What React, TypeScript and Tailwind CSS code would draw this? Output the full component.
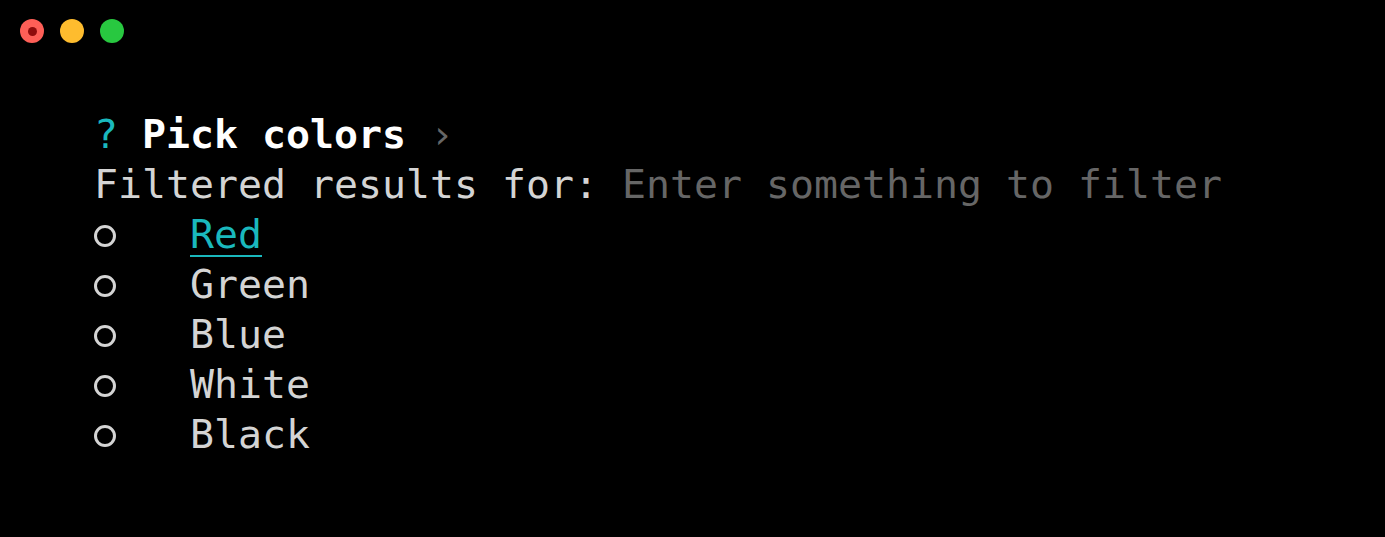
import React from "react";

const items = ["Red", "Green", "Blue", "White", "Black"];

export default function App() {
  return (
    <div
      className="w-[1385px] h-[537px] bg-black overflow-hidden"
      style={{ fontFamily: '"DejaVu Sans Mono", "Liberation Mono", monospace' }}
    >
      <div className="flex items-center gap-[16px] pl-[20px] pt-[19px]">
        <div className="w-[24px] h-[24px] rounded-full bg-[#fe5f57] flex items-center justify-center">
          <div className="w-[9px] h-[9px] rounded-full bg-[#8f0c0c]" />
        </div>
        <div className="w-[24px] h-[24px] rounded-full bg-[#febc2e]" />
        <div className="w-[24px] h-[24px] rounded-full bg-[#28c840]" />
      </div>
      <div className="pl-[94px] pt-[66px] text-[39.86px] leading-[50px] text-[#d4d4d4] whitespace-pre">
        <div>
          <span className="text-[#1ab8bd]">?</span>
          <span> </span>
          <span className="font-bold text-white">Pick colors</span>
          <span> </span>
          <span className="text-[#666666]">›</span>
        </div>
        <div>
          <span>Filtered results for: </span>
          <span className="text-[#666666]">Enter something to filter</span>
        </div>
        {items.map((name, i) => (
          <div key={name} className="flex items-center">
            <span className="w-[24px] h-[50px] flex items-center justify-center pt-[4px] pr-[2px]">
              <span className="w-[22px] h-[22px] rounded-full border-[3px] border-[#d4d4d4]" />
            </span>
            <span className="w-[72px]" />
            {i === 0 ? (
              <span className="text-[#1ab8bd] underline decoration-[1.5px] underline-offset-[7px]">{name}</span>
            ) : (
              <span>{name}</span>
            )}
          </div>
        ))}
      </div>
    </div>
  );
}
